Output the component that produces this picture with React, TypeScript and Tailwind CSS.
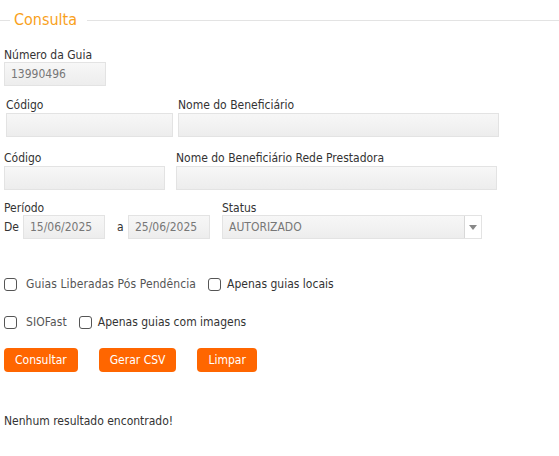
import React from "react";

const font = { fontFamily: '"DejaVu Sans Condensed", "DejaVu Sans", sans-serif' };

function Input({ w, value }: { w: string; value?: string }) {
  return (
    <div
      className={`${w} h-[24px] border border-[#e3e3e3] bg-gradient-to-b from-[#f7f7f7] to-[#ededed] flex items-center px-[6px] text-[12px] text-[#777]`}
    >
      {value}
    </div>
  );
}

function Check({ label, gray }: { label: string; gray?: boolean }) {
  return (
    <div className="flex items-center">
      <span className="w-[13px] h-[13px] border border-[#555] rounded-[3px] bg-white" />
      <span className={`text-[12px] ${gray ? "ml-[9px] text-[#555] tracking-[0.1px]" : "ml-[6px] text-[#333]"}`}>{label}</span>
    </div>
  );
}

function Btn({ label }: { label: string }) {
  return (
    <button className="h-[24px] rounded-[4px] bg-[#ff6600] text-white text-[12px] px-[11px] flex items-center">
      {label}
    </button>
  );
}

export default function App() {
  return (
    <div className="w-[559px] h-[456px] bg-white text-[#333] text-[12px]" style={font}>
      <div className="flex items-center pt-[12px] h-[28px]">
        <div className="w-[10px] h-px bg-[#e3e3e3]" />
        <span className="text-[16px] text-[#f9a11b] px-[4px] leading-none">Consulta</span>
        <div className="flex-1 h-px bg-[#e3e3e3] ml-[6px]" />
      </div>

      <div className="pl-[4px] mt-[20px]">
        <div className="leading-[14px]">Número da Guia</div>
        <Input w="w-[102px]" value="13990496" />
      </div>

      <div className="flex pl-[6px] mt-[11px] gap-[5px]">
        <div>
          <div className="leading-[16px]">Código</div>
          <Input w="w-[167px]" />
        </div>
        <div>
          <div className="leading-[16px]">Nome do Beneficiário</div>
          <Input w="w-[321px]" />
        </div>
      </div>

      <div className="flex pl-[4px] mt-[14px] gap-[11px]">
        <div>
          <div className="leading-[15px]">Código</div>
          <Input w="w-[161px]" />
        </div>
        <div>
          <div className="leading-[15px]">Nome do Beneficiário Rede Prestadora</div>
          <Input w="w-[321px]" />
        </div>
      </div>

      <div className="flex pl-[4px] mt-[11px]">
        <div>
          <div className="leading-[14px]">Período</div>
          <div className="flex items-center">
            <span className="w-[19px]">De</span>
            <Input w="w-[82px]" value="15/06/2025" />
            <span className="ml-[12px] w-[11px]">a</span>
            <Input w="w-[82px]" value="25/06/2025" />
          </div>
        </div>
        <div className="ml-[12px]">
          <div className="leading-[14px]">Status</div>
          <div className="flex w-[260px] h-[24px] border border-[#e3e3e3] bg-gradient-to-b from-[#f7f7f7] to-[#ededed]">
            <span className="flex-1 flex items-center px-[6px] text-[#777]">AUTORIZADO</span>
            <span className="w-[17px] border-l border-[#d8d8d8] bg-white flex items-center justify-center">
              <svg width="8" height="5" viewBox="0 0 8 5"><path d="M0 0h8L4 5z" fill="#888" /></svg>
            </span>
          </div>
        </div>
      </div>

      <div className="flex items-center pl-[4px] mt-[36px] gap-[12px]">
        <Check label="Guias Liberadas Pós Pendência" gray />
        <Check label="Apenas guias locais" />
      </div>

      <div className="flex items-center pl-[4px] mt-[20px] gap-[12px]">
        <Check label="SIOFast" gray />
        <Check label="Apenas guias com imagens" />
      </div>

      <div className="flex pl-[4px] mt-[17px] gap-[21px]">
        <Btn label="Consultar" />
        <Btn label="Gerar CSV" />
        <Btn label="Limpar" />
      </div>

      <div className="pl-[4px] mt-[40px]">Nenhum resultado encontrado!</div>
    </div>
  );
}
